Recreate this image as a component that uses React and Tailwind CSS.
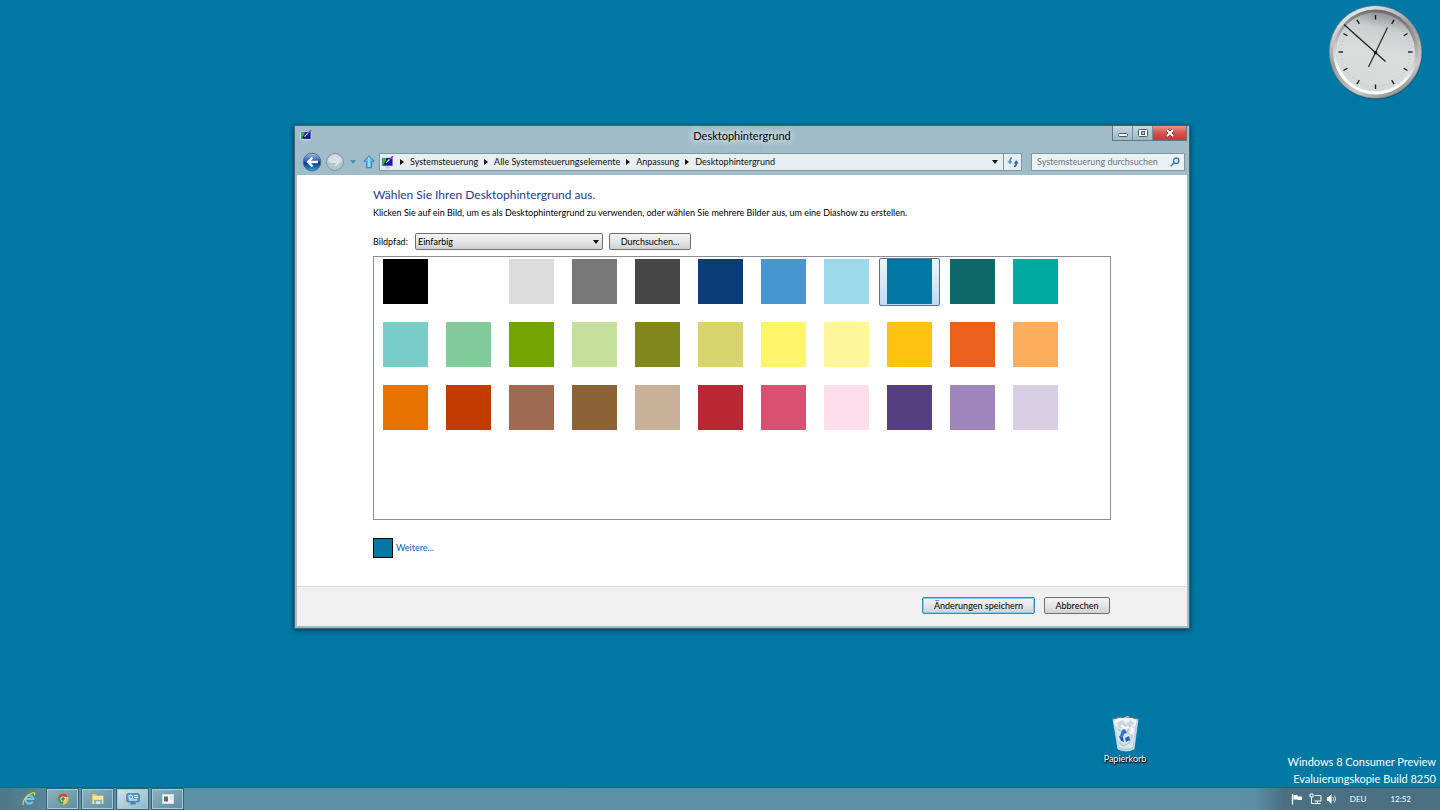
import React, { useState } from 'react';

const COLORS = [
  ['Schwarz', '#000000'], ['Weiß', '#ffffff'], ['Hellgrau', '#dcdcdc'], ['Grau', '#787878'], ['Dunkelgrau', '#464646'],
  ['Marine', '#0a3c78'], ['Blau', '#4696d2'], ['Hellblau', '#9bd9eb'], ['Petrol', '#0078a4'], ['Dunkelgrün', '#0f6969'], ['Türkis', '#00aaa0'],
  ['Aqua', '#78cdc8'], ['Mint', '#82cb9b'], ['Grün', '#73a400'], ['Hellgrün', '#c5e09b'], ['Oliv', '#82871b'],
  ['Senf', '#d8d56e'], ['Gelb', '#fff56a'], ['Hellgelb', '#fff59b'], ['Goldgelb', '#ffc30f'], ['Orangerot', '#eb601a'], ['Apricot', '#fcae5c'],
  ['Orange', '#e67300'], ['Rost', '#c23c00'], ['Rotbraun', '#a06a52'], ['Braun', '#8c6237'], ['Beige', '#c8b099'],
  ['Rot', '#b92832'], ['Pink', '#d95070'], ['Rosa', '#ffdeec'], ['Violett', '#553f80'], ['Flieder', '#a186be'], ['Hellviolett', '#d9cfe5'],
];

function MonitorIcon({ className }) {
  return (
    <svg viewBox="0 0 12 12" className={className} aria-hidden="true">
      <rect x="0.3" y="1.2" width="11" height="8.6" rx="0.6" fill="#d8d8e4" />
      <rect x="1" y="1.9" width="9.6" height="7" fill="#0a1ab0" />
      <path d="M1 1.9h4L3 8.900H1z" fill="#2fae54" />
      <path d="M2 7.900c2-3.400 4.500-4.200 5.500-3.600l-1 2.200-2 1z" fill="#060c38" />
      <path d="M4.500 6.600 8 3" stroke="#fff" strokeWidth="1.2" />
      <path d="m7.600 3.400 3.600-3.200" stroke="#9b3fa0" strokeWidth="1.4" />
      <path d="M4.500 9.800h3l1 1.700H3.500z" fill="#c9bfd4" />
    </svg>
  );
}

function Clock() {
  const ticks = Array.from({ length: 60 }, (_, i) => i);
  return (
    <svg viewBox="0 0 96 96" className="absolute top-1 right-4 h-24 w-24" aria-hidden="true">
      <defs>
        <linearGradient id="rim" x1="0.2" y1="0" x2="0.7" y2="1">
          <stop offset="0" stopColor="#f4f4f4" />
          <stop offset="0.45" stopColor="#9b9b9f" />
          <stop offset="0.8" stopColor="#c9c9cc" />
          <stop offset="1" stopColor="#8c8c90" />
        </linearGradient>
        <linearGradient id="inner" x1="0.6" y1="0" x2="0.4" y2="1">
          <stop offset="0" stopColor="#68686d" />
          <stop offset="0.5" stopColor="#c4c4c7" />
          <stop offset="0.8" stopColor="#ffffff" />
          <stop offset="1" stopColor="#ffffff" />
        </linearGradient>
        <linearGradient id="face" x1="0.6" y1="0" x2="0.4" y2="1">
          <stop offset="0" stopColor="#8f9194" />
          <stop offset="0.2" stopColor="#cbcece" />
          <stop offset="0.5" stopColor="#d9dddc" />
          <stop offset="1" stopColor="#d6d9d8" />
        </linearGradient>
      </defs>
      <circle cx="48" cy="49" r="46.500" fill="#003f5c" opacity="0.45" />
      <circle cx="47.500" cy="48" r="46.300" fill="url(#rim)" stroke="#6f777b" strokeWidth="0.6" />
      <circle cx="47.500" cy="48" r="42.500" fill="url(#inner)" />
      <circle cx="47.500" cy="48" r="39.500" fill="url(#face)" />
      {ticks.map((i) => (
        <line
          key={i}
          x1="47.500"
          x2="47.500"
          y1={i % 5 === 0 ? 11 : 13}
          y2={i % 5 === 0 ? 15.500 : 13.800}
          stroke={i % 5 === 0 ? '#1c1c1c' : '#a8abab'}
          strokeWidth={i % 5 === 0 ? 1.400 : 0.700}
          transform={`rotate(${i * 6} 47.5 48)`}
        />
      ))}
      <path d="M40.500 63 59.500 23.500" stroke="#333" strokeWidth="1.3" />
      <path d="M16 20.500 57.500 57.500" stroke="#222" strokeWidth="1.3" />
      <circle cx="47.500" cy="48.500" r="1.700" fill="#111" />
    </svg>
  );
}

function RecycleBin() {
  return (
    <a href="#papierkorb" className="absolute right-[293px] bottom-[22px] flex w-11 flex-col items-center">
      <svg viewBox="0 0 30 38" className="h-[38px] w-[30px]" aria-hidden="true">
        <path d="M3 4h25l-4 30q-8 4-16 0z" fill="#b5ced9" />
        <path d="M5 7h21l-3.400 25q-7 3-14 0z" fill="#dce5ea" />
        <path d="m4 6 4-4 5 1 4-2 6 2 4 3-2 5H5z" fill="#f1f4f6" />
        <path d="m7 8 5-3 4 4 5-4 3 4-6 4-5-2-4 3z" fill="#cbd5dc" />
        <path d="m8 14 4 4-3 5m11-12-3 6 5 4-3 8m-10-2 4 4 6-3" fill="none" stroke="#b3c2cd" strokeWidth="1.2" />
        <path d="m21 12 2 4-3 3m-9-9 4 3 4-1" fill="none" stroke="#fff" strokeWidth="2" />
        <path d="m12 15 3-1 2 4-3 1-1 3-3-1z" fill="#2f72cf" />
        <path d="m9 21 4 1 1 5-3-1zM15 23l4-2 1 4-4 2z" fill="#1d5fc2" />
        <path d="M3 4h25l-4 30q-8 4-16 0z" fill="none" stroke="#e3f2f8" strokeWidth="0.9" opacity="0.8" />
        <path d="M3 4q12-4 25 0" fill="none" stroke="#5f6f79" strokeWidth="1" />
      </svg>
      <span className="text-[9px] leading-3 text-white [text-shadow:0_1px_2px_#000,1px_1px_1px_#000]">Papierkorb</span>
    </a>
  );
}

function TitleBar() {
  return (
    <header className="flex h-6 items-start px-0.5">
      <div className="flex flex-1">
        <MonitorIcon className="mt-1 ml-[3px] h-3 w-3" />
      </div>
      <h1 className="pt-px text-[11px] leading-[18px] text-black [text-shadow:0_0_6px_#fff,0_0_8px_#e4f1f6]">Desktophintergrund</h1>
      <div className="flex flex-1 justify-end">
        <div className="flex h-[15px] border border-t-0 border-[#5f7985]">
          <button aria-label="Minimieren" className="flex w-5 items-center justify-center border-r border-[#71909e] bg-linear-to-b from-[#c6d7df] to-[#9fb9c5]">
            <svg viewBox="0 0 10 4" className="mt-1 h-1 w-2.5"><rect x="0.500" y="0.500" width="9" height="3" rx="1" fill="#fff" stroke="#4b5960" /></svg>
          </button>
          <button aria-label="Maximieren" className="flex w-5 items-center justify-center border-r border-[#71909e] bg-linear-to-b from-[#c6d7df] to-[#9fb9c5]">
            <svg viewBox="0 0 10 8" className="h-2 w-2.5"><rect x="0.500" y="0.500" width="9" height="7" rx="1" fill="#fff" stroke="#4b5960" /><rect x="3.500" y="2.500" width="3" height="3" fill="#b3c8d1" stroke="#4b5960" /></svg>
          </button>
          <button aria-label="Schließen" className="flex w-[33px] items-center justify-center bg-linear-to-b from-[#e5938b] via-[#d2524b] to-[#ca3932]">
            <svg viewBox="0 0 10 8" className="h-2 w-2.5"><path d="m2 1 6 6m0-6L2 7" stroke="#6b3435" strokeWidth="3.200" /><path d="m2 1 6 6m0-6L2 7" stroke="#fff" strokeWidth="1.900" /></svg>
          </button>
        </div>
      </div>
    </header>
  );
}

const PATH = ['Systemsteuerung', 'Alle Systemsteuerungselemente', 'Anpassung', 'Desktophintergrund'];

function AddressRow() {
  return (
    <nav className="flex h-[25px] items-start pt-0.5 pr-0.5 pl-[3px]">
      <div className="flex h-5 items-center">
        <button aria-label="Zurück" className="ml-0.5 h-5 w-5">
          <svg viewBox="0 0 20 20" className="h-5 w-5">
            <defs>
              <linearGradient id="back" x1="0" y1="0" x2="0" y2="1">
                <stop offset="0" stopColor="#a7c4ed" /><stop offset="0.45" stopColor="#2761b5" /><stop offset="0.55" stopColor="#0a3489" /><stop offset="1" stopColor="#36a1e4" />
              </linearGradient>
            </defs>
            <circle cx="10" cy="10" r="8.800" fill="url(#back)" stroke="#47658b" strokeWidth="0.900" />
            <path d="M16 10H6m4.600-4.400L6 10l4.600 4.400" fill="none" stroke="#fff" strokeWidth="2.300" />
          </svg>
        </button>
        <button aria-label="Vorwärts" className="ml-[3px] h-5 w-5">
          <svg viewBox="0 0 20 20" className="h-5 w-5">
            <circle cx="10" cy="10" r="8.500" fill="#b4c5cc" stroke="#8097a2" />
            <path d="M2.500 10a7.500 7.500 0 0 1 15 0q-8-2-15 0" fill="#d3dee2" />
            <path d="M5 10h9m-4-4 4 4-4 4" fill="none" stroke="#dde5e8" strokeWidth="2" />
          </svg>
        </button>
        <button aria-label="Letzte Seiten" className="flex h-4 w-[11px] items-center justify-end">
          <svg viewBox="0 0 6 4" className="h-1 w-1.5"><path d="M0 0h6L3 4z" fill="#4d8cae" /></svg>
        </button>
        <button aria-label="Nach oben" className="ml-1.5 flex w-[14px] justify-center">
          <svg viewBox="0 0 12 14" className="h-3.5 w-3"><path d="M6 .7 11.300 6.200H8.500v6.600h-5V6.200H.7z" fill="#5cbcf2" stroke="#2a7fb9" strokeWidth="0.900" /><path d="M6 2.500v9.500" stroke="#a8e1fb" strokeWidth="1.500" /></svg>
        </button>
      </div>
      <div className="ml-[3px] mt-px flex h-[18px] min-w-0 flex-1 items-center border border-[#7d97a3] bg-[#e6eef2]">
        <div className="flex min-w-0 flex-1 items-center overflow-hidden pl-px">
          <MonitorIcon className="h-[13px] w-[13px] shrink-0" />
          {PATH.map((name) => (
            <React.Fragment key={name}>
              <svg viewBox="0 0 4 6" className="mx-1.5 h-1.5 w-1 shrink-0"><path d="M0 0v6l4-3z" fill="#111" /></svg>
              <a href={`#${name}`} className="text-[9px] leading-4 whitespace-nowrap text-[#101010]">{name}</a>
            </React.Fragment>
          ))}
        </div>
        <button aria-label="Verlauf" className="flex h-4 w-4 items-center justify-center">
          <svg viewBox="0 0 6 4" className="h-1 w-1.5"><path d="M0 0h6L3 4z" fill="#111" /></svg>
        </button>
        <button aria-label="Aktualisieren" className="flex h-4 w-[18px] items-center justify-center border-l border-[#7d97a3]">
          <svg viewBox="0 0 12 12" className="h-3 w-3">
            <path d="M5 2.200C3 2.200 3 4 3 6" fill="none" stroke="#3d9ad1" strokeWidth="1.700" /><path d="M.4 5.200h5L3 8.300z" fill="#3d9ad1" />
            <path d="M7 10.500c2 0 2.200-1.500 2.200-3.500" fill="none" stroke="#2767b0" strokeWidth="1.700" /><path d="M6.700 7.500h5L9.200 4.200z" fill="#2767b0" />
          </svg>
        </button>
      </div>
      <label className="mt-px ml-[9px] flex h-[18px] w-[154px] items-center border border-[#7d97a3] bg-[#eaf1f4] pr-1 pl-[5px]">
        <input type="search" aria-label="Systemsteuerung durchsuchen" placeholder="Systemsteuerung durchsuchen" className="w-0 min-w-0 flex-1 bg-transparent text-[9px] leading-4 outline-none placeholder:text-[#6d777c]" />
        <svg viewBox="0 0 10 10" className="h-2.5 w-2.5 shrink-0"><circle cx="6.200" cy="3.700" r="2.700" fill="none" stroke="#3478b5" strokeWidth="1.300" /><path d="M4.200 5.800.7 9.300" stroke="#3478b5" strokeWidth="1.500" /></svg>
      </label>
    </nav>
  );
}

const BUTTON = 'h-[17px] rounded-xs border bg-linear-to-b from-[#f3f3f3] via-[#e6e6e6] to-[#d0d0d0] text-[9px] leading-[15px] text-black';

function Settings() {
  const [selected, setSelected] = useState(8);
  return (
    <main className="bg-white">
      <div className="px-[76px] pt-3">
        <h2 className="text-[12px] leading-4 text-[#1d3c8f]">Wählen Sie Ihren Desktophintergrund aus.</h2>
        <p className="mt-1 text-[9px] leading-3 text-black">
          Klicken Sie auf ein Bild, um es als Desktophintergrund zu verwenden, oder wählen Sie mehrere Bilder aus, um eine Diashow zu erstellen.
        </p>
        <div className="mt-[14px] flex items-center text-[9px] leading-4">
          <label htmlFor="pfad" className="w-[42px]">Bildpfad:</label>
          <div className="relative w-[188px]">
            <select id="pfad" className={`${BUTTON} block w-full appearance-none border-[#707070] pl-0.5`}>
              <option>Einfarbig</option>
            </select>
            <svg viewBox="0 0 6 4" className="pointer-events-none absolute top-[7px] right-1 h-1 w-1.5"><path d="M0 0h6L3 4z" fill="#111" /></svg>
          </div>
          <button className={`${BUTTON} ml-1.5 w-[82px] border-[#707070]`}>Durchsuchen...</button>
        </div>
        <div className="mt-1.5 h-[264px] border border-[#8a8e94] p-px">
          <div className="flex flex-wrap gap-x-0.5 gap-y-[15px]">
            {COLORS.map(([name, color], i) => (
              <button
                key={color}
                aria-label={name}
                aria-pressed={selected === i}
                onClick={() => setSelected(i)}
                className={
                  selected === i
                    ? 'flex h-12 w-[61px] justify-center rounded-xs border border-[#5b6f95] bg-linear-to-b from-[#eef5fe] to-[#c3daf8]'
                    : 'flex h-12 w-[61px] justify-center border border-transparent'
                }
              >
                <span className="h-[45px] w-[45px]" style={{ backgroundColor: color }} />
              </button>
            ))}
          </div>
        </div>
        <div className="mt-[18px] flex items-center pb-7">
          <span className="h-5 w-5 border border-black bg-[#0078a4]" />
          <a href="#weitere" className="ml-[3px] text-[9px] leading-4 text-[#0066bb]">Weitere...</a>
        </div>
      </div>
      <footer className="flex h-10 justify-end gap-[9px] border-t border-[#dadada] bg-[#f0f0f0] pt-2.5 pr-[77px]">
        <button className={`${BUTTON} w-[113px] border-[#2f8fb5] shadow-[inset_0_0_0_1px_#7fd0ec]`}>Änderungen speichern</button>
        <button className={`${BUTTON} w-[66px] border-[#707070]`}>Abbrechen</button>
      </footer>
    </main>
  );
}

const TASK = 'flex w-[33px] items-center justify-center border border-[#35627a] bg-linear-to-br shadow-[inset_0_0_0_1px_#a8c8d4]';
const IDLE = 'from-[#8fb2c0] to-[#5e8da2]';

function Taskbar() {
  return (
    <footer className="flex h-[23px] border-t border-[#2a5b72] bg-linear-to-r from-[#4f7689] via-[#5d90a6] via-5% to-[#5b8ea5] text-white">
      <button aria-label="Internet Explorer" className="ml-3 flex w-[33px] items-center justify-center">
        <svg viewBox="0 0 14 14" className="h-3.5 w-3.5">
          <path d="M10.800 9.600A4 4 0 1 1 11.300 7H4" fill="none" stroke="#6ccbf2" strokeWidth="2" />
          <path d="M1.600 12.800C-.8 10.500 4.800 2.600 10.600.8c2.300-.6 2.600.8 1.700 2.600" fill="none" stroke="#f3cf46" strokeWidth="1.200" />
        </svg>
      </button>
      <div className="ml-px flex gap-0.5">
        <button aria-label="Chrome" className={`${TASK} ${IDLE}`}>
          <svg viewBox="0 0 12 12" className="h-3 w-3">
            <circle cx="6" cy="6" r="5.500" fill="#efcb38" />
            <path d="M6 6 1.200 3.300A5.500 5.500 0 0 1 11 3.700H6z" fill="#d9402f" />
            <path d="M6 6 1.200 3.300A5.500 5.500 0 0 0 5.300 11.500L7.600 7z" fill="#45a04b" />
            <circle cx="6" cy="6" r="2.500" fill="#fff" /><circle cx="6" cy="6" r="1.900" fill="#3f83c8" />
          </svg>
        </button>
        <button aria-label="Explorer" className={`${TASK} ${IDLE}`}>
          <svg viewBox="0 0 14 12" className="h-3 w-3.5">
            <path d="M1 1h4l1 1.500h6.500V11H1z" fill="#e3c667" /><path d="M2 3h10v8H2z" fill="#f7e79d" /><path d="M4 11V7.500h6V11" fill="none" stroke="#63aeda" strokeWidth="1.600" />
          </svg>
        </button>
        <button aria-label="Anpassung" className={`${TASK} from-[#d3e4ea] to-[#8db5c6]`}>
          <svg viewBox="0 0 14 12" className="h-3 w-3.5">
            <rect x="0.800" y="0.800" width="12.400" height="8" rx="0.800" fill="#5ba5d8" stroke="#3a76a6" /><circle cx="4.700" cy="4" r="1.900" fill="none" stroke="#e9f7ff" /><path d="M8 2.600h4M8 4.600h4M3 7h8" stroke="#e9f7ff" /><path d="M5 9h4l1 2.500H4z" fill="#4681ab" />
          </svg>
        </button>
        <button aria-label="Programm" className={`${TASK} ${IDLE}`}>
          <svg viewBox="0 0 12 10" className="h-2.5 w-3"><rect x="0.500" y="0.500" width="11" height="9" fill="#f4f6f6" stroke="#d0dadd" /><path d="M2 2.500h4v5H2z" fill="#50716f" /><path d="M7.500 3h3M7.500 5h3" stroke="#c5cdcf" /></svg>
        </button>
      </div>
      <div className="ml-auto flex items-center bg-linear-to-r from-transparent via-[#4b7081] via-15% to-[#4b7081] pr-[29px] pl-9 text-[8px]">
        <svg viewBox="0 0 12 12" className="h-3 w-3"><path d="M1.500 1v10.500" stroke="#fff" strokeWidth="1.300" /><path d="M2.500 2h4v1.500H11V7H6.800V6.500h-4.300z" fill="#fff" /></svg>
        <svg viewBox="0 0 13 12" className="ml-1.5 h-3 w-[13px]"><path d="M5.500 2.500h6.500v5.500H5.500M8.500 8v2.500m-3 0h6M2.500 4.500v6h3M1 1v3h3V1z" fill="none" stroke="#fff" /></svg>
        <svg viewBox="0 0 12 12" className="ml-1 h-3 w-3"><path d="M1 4h1.500L5.500 1v10L2.500 8H1z" fill="#fff" /><path d="M7 4q1.300 2 0 4m1.500-5.500q2.300 3.500 0 7" fill="none" stroke="#dbe8ed" strokeWidth="0.900" /></svg>
        <span className="ml-3">DEU</span>
        <time className="ml-6">12:52</time>
      </div>
    </footer>
  );
}

export default function App() {
  return (
    <div className="relative flex min-h-screen flex-col overflow-hidden bg-[#0078a4] font-['Lato','Open_Sans',sans-serif]">
      <div className="relative flex-1">
        <Clock />
        <section className="absolute top-[125px] right-[250px] left-[294px] border border-[#46616e] bg-[#a0bcc8] shadow-[0_1px_5px_rgba(0,20,35,0.7)]">
          <TitleBar />
          <div className="px-0.5 pb-0.5">
            <AddressRow />
            <Settings />
          </div>
        </section>
        <RecycleBin />
        <p className="absolute right-1 bottom-0 text-right text-[11px] leading-[17px] text-white">
          Windows 8 Consumer Preview
          <br />
          Evaluierungskopie Build 8250
        </p>
      </div>
      <Taskbar />
    </div>
  );
}
